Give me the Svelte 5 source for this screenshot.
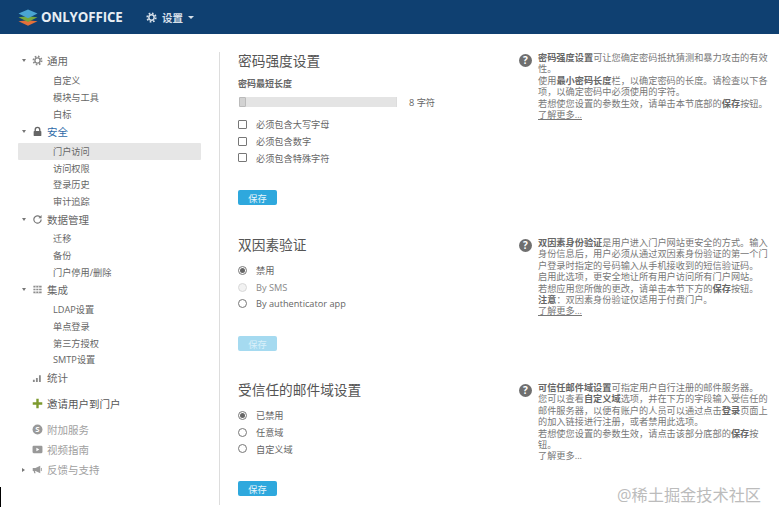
<script>
  const nav = [
    { label: '通用', icon: 'gear', caret: 'down', subs: ['自定义', '模块与工具', '白标'] },
    { label: '安全', icon: 'lock', caret: 'down', active: true, subs: ['门户访问', '访问权限', '登录历史', '审计追踪'], selected: '门户访问' },
    { label: '数据管理', icon: 'sync', caret: 'down', subs: ['迁移', '备份', '门户停用/删除'] },
    { label: '集成', icon: 'grid', caret: 'down', subs: ['LDAP设置', '单点登录', '第三方授权', 'SMTP设置'] },
    { label: '统计', icon: 'bars', subs: [] }
  ];
  const extras = [
    { label: '邀请用户到门户', icon: 'plus', cls: 'invite' },
    { label: '附加服务', icon: 'dollar', cls: 'muted first' },
    { label: '视频指南', icon: 'video', cls: 'muted' },
    { label: '反馈与支持', icon: 'horn', cls: 'muted', caret: 'right' }
  ];
</script>

{#snippet icon(name)}
  <svg class="ic" viewBox="0 0 12 12" width="12" height="12" aria-hidden="true">
    {#if name === 'gear'}
      <circle cx="6" cy="6" r="4.4" fill="none" stroke="#8a8a8a" stroke-width="2" stroke-dasharray="1.7 1.75" />
      <circle cx="6" cy="6" r="2.8" fill="none" stroke="#8a8a8a" stroke-width="1.5" />
    {:else if name === 'lock'}
      <path d="M3.5 6V4a2.5 2.5 0 0 1 5 0v2" fill="none" stroke="#666" stroke-width="1.5" />
      <rect x="1.8" y="5.4" width="8.4" height="5.6" rx="1" fill="#666" />
    {:else if name === 'sync'}
      <path d="M10 6a4 4 0 1 1-1.2-2.9" fill="none" stroke="#777" stroke-width="1.3" />
      <path d="M10.4 1.2v3.4H7z" fill="#777" />
    {:else if name === 'grid'}
      <path d="M1.5 2h9v1.8h-9zM1.5 5.1h9v1.8h-9zM1.5 8.2h9V10h-9z" fill="#8c8c8c" />
      <path d="M4.2 2v8M7.3 2v8" stroke="#fff" stroke-width=".8" />
    {:else if name === 'bars'}
      <path d="M1 8.5h2V11H1zM4.3 6.5h2V11h-2zM7.6 3.5h2V11h-2z" fill="#8a8a8a" />
    {:else if name === 'plus'}
      <path d="M4.7 .8h2.6v3.9h3.9v2.6H7.3v3.9H4.7V7.3H.8V4.7h3.9z" fill="#7d9a2e" />
    {:else if name === 'dollar'}
      <circle cx="6" cy="6" r="5.4" fill="#999" />
      <text x="6" y="9" text-anchor="middle" class="dollar">S</text>
    {:else if name === 'video'}
      <rect x=".6" y="2" width="10.8" height="8" rx="1.2" fill="#999" />
      <path d="M4.8 4.2v3.6L8 6z" fill="#fff" />
    {:else if name === 'horn'}
      <path d="M.8 4.4h3L9 2v8L3.8 7.6h-.5l.6 2.6H2.4L1.8 7.6h-1z" fill="#999" />
      <path d="M10.2 4.3v3.4" stroke="#999" stroke-width="1" />
    {/if}
  </svg>
{/snippet}

{#snippet caret(dir)}
  <span class="caret {dir}"></span>
{/snippet}

{#snippet help(lines)}
  <div class="help">
    <span class="q">?</span>
    <p>
      {#each lines as line}
        <span class="line" class:link={line.link}>
          {#if line.bold}<b>{line.bold}</b>{/if}{line.text}{#if line.bold2}<b>{line.bold2}</b>{/if}{line.text2 ?? ''}
        </span>
      {/each}
    </p>
  </div>
{/snippet}

<div class="page">
  <header>
    <svg class="logo" viewBox="0 0 20 17" width="20" height="17" aria-hidden="true">
      <path d="M10 11.2 19.5 12.2 10 16.8 .5 12.2z" fill="#e2703a" />
      <path d="M10 7.2 19.5 8.2 10 12.9 .5 8.2z" fill="#76a83c" />
      <path d="M10 .4 19.5 4.6 10 9.2 .5 4.6z" fill="#4aa5d1" />
    </svg>
    <span class="brand">ONLYOFFICE</span>
    <svg class="hgear" viewBox="0 0 12 12" width="11" height="11" aria-hidden="true">
      <circle cx="6" cy="6" r="4.6" fill="none" stroke="#d5dfe9" stroke-width="2" stroke-dasharray="1.8 1.8" />
      <circle cx="6" cy="6" r="2.9" fill="none" stroke="#d5dfe9" stroke-width="1.6" />
    </svg>
    <span class="hset">设置</span>
    <span class="hcaret"></span>
  </header>

  <div class="body">
    <nav>
      {#each nav as group}
        <div class="main" class:active={group.active}>
          <span class="cw">{#if group.caret}{@render caret(group.caret)}{/if}</span>
          {@render icon(group.icon)}
          <span>{group.label}</span>
        </div>
        {#each group.subs as s}
          <div class="sub" class:selected={s === group.selected}>{s}</div>
        {/each}
      {/each}
      {#each extras as e}
        <div class="main extra {e.cls}">
          <span class="cw">{#if e.caret}{@render caret(e.caret)}{/if}</span>
          {@render icon(e.icon)}
          <span>{e.label}</span>
        </div>
      {/each}
    </nav>

    <main>
      <section class="s1">
        <div class="col">
          <h2>密码强度设置</h2>
          <div class="lbl">密码最短长度</div>
          <div class="slider">
            <div class="track"><span class="thumb"></span></div>
            <span class="val">8 字符</span>
          </div>
          <div class="opts">
            <label><span class="box"></span>必须包含大写字母</label>
            <label><span class="box"></span>必须包含数字</label>
            <label><span class="box"></span>必须包含特殊字符</label>
          </div>
          <button class="save">保存</button>
        </div>
        {@render help([
          { bold: '密码强度设置', text: '可让您确定密码抵抗猜测和暴力攻击的有效' },
          { text: '性。' },
          { text: '使用', bold2: '最小密码长度', text2: '栏，以确定密码的长度。请检查以下各' },
          { text: '项，以确定密码中必须使用的字符。' },
          { text: '若想使您设置的参数生效，请单击本节底部的', bold2: '保存', text2: '按钮。' },
          { text: '了解更多...', link: true }
        ])}
      </section>

      <section class="s2">
        <div class="col">
          <h2>双因素验证</h2>
          <div class="opts radios">
            <label><span class="radio on"></span>禁用</label>
            <label class="off"><span class="radio dis"></span>By SMS</label>
            <label><span class="radio"></span>By authenticator app</label>
          </div>
          <button class="save disabled">保存</button>
        </div>
        {@render help([
          { bold: '双因素身份验证', text: '是用户进入门户网站更安全的方式。输入' },
          { text: '身份信息后，用户必须从通过双因素身份验证的第一个门' },
          { text: '户登录时指定的号码输入从手机接收到的短信验证码。' },
          { text: '启用此选项，更安全地让所有用户访问所有门户网站。' },
          { text: '若想应用您所做的更改，请单击本节下方的', bold2: '保存', text2: '按钮。' },
          { bold: '注意', text: '：双因素身份验证仅适用于付费门户。' },
          { text: '了解更多...', link: true }
        ])}
      </section>

      <section class="s3">
        <div class="col">
          <h2>受信任的邮件域设置</h2>
          <div class="opts radios">
            <label><span class="radio on"></span>已禁用</label>
            <label><span class="radio"></span>任意域</label>
            <label><span class="radio"></span>自定义域</label>
          </div>
          <button class="save">保存</button>
        </div>
        {@render help([
          { bold: '可信任邮件域设置', text: '可指定用户自行注册的邮件服务器。' },
          { text: '您可以查看', bold2: '自定义域', text2: '选项，并在下方的字段输入受信任的' },
          { text: '邮件服务器，以便有账户的人员可以通过点击', bold2: '登录', text2: '页面上' },
          { text: '的加入链接进行注册，或者禁用此选项。' },
          { text: '若想使您设置的参数生效，请点击该部分底部的', bold2: '保存', text2: '按' },
          { text: '钮。' },
          { text: '了解更多...' }
        ])}
      </section>
    </main>
  </div>

  <div class="tick"></div>
  <div class="mark">@稀土掘金技术社区</div>
</div>

<style>
  :global(body) { margin: 0; background: #fff; }
  .page {
    position: relative;
    width: 779px;
    height: 519px;
    overflow: hidden;
    background: #fff;
    color: #444;
    font-family: "Open Sans", "Noto Sans CJK SC", sans-serif;
    font-size: 9.2px;
  }
  header {
    height: 34px;
    background: #0f4071;
    display: flex;
    align-items: center;
    padding-left: 18px;
    box-sizing: border-box;
    color: #fff;
  }
  .brand { margin-left: 3px; font-size: 13.3px; font-weight: 700; letter-spacing: -.1px; color: #e8eef4; width: 105px; }
  .hset { margin-left: 5px; font-size: 10.5px; color: #d5dfe9; font-weight: 700; }
  .hgear { display: block; }
  .hcaret {
    margin-left: 5px;
    border: 3px solid transparent;
    border-top: 3px solid #d5dfe9;
    border-bottom: 0;
  }
  .body { display: grid; grid-template-columns: 219px 1fr; height: 471px; }

  nav { padding-top: 17.5px; padding-left: 18px; box-sizing: border-box; width: 219px; }
  .main {
    height: 20.5px;
    margin: -1px 0 1px;
    display: flex;
    align-items: center;
    font-size: 10.5px;
    color: #666;
  }
  .main.active { color: #2e6aa8; }
  .cw { width: 10px; margin-left: 4px; flex: none; display: flex; }
  .caret { display: block; border: 2.5px solid transparent; }
  .caret.down { border-top: 3px solid #777; border-bottom: 0; }
  .caret.right { border-left: 3px solid #777; border-right: 0; }
  .ic { flex: none; width: 11px; height: 11px; margin-right: 4px; }
  .dollar { font: 700 8.5px "Open Sans", sans-serif; fill: #fff; }
  .sub {
    height: 16.75px;
    padding-top: 2px;
    line-height: 14.75px;
    padding-left: 35px;
    width: 183px;
    box-sizing: border-box;
    color: #666;
  }
  .sub.selected { background: #e6e6e6; border-radius: 1px; }
  .extra { height: 20px; margin: 0; }
  .extra.invite { margin-top: 6px; margin-bottom: 6px; color: #555; }
  .extra.first { margin-top: 6px; }
  .extra.muted { color: #a0a0a0; }

  main {
    margin-top: 18px;
    height: 453px;
    border-left: 1px solid #ddd;
    padding-left: 18px;
  }
  section { display: grid; grid-template-columns: 281px 250px; }
  .s1 { height: 184px; }
  .s2 { height: 145px; }
  h2 {
    margin: 0;
    font-size: 13.7px;
    line-height: 18px;
    font-weight: 400;
    color: #555;
  }
  .lbl { margin-top: 8px; font-size: 9px; font-weight: 700; color: #666; line-height: 12px; }
  .slider { display: flex; align-items: center; margin-top: 6px; height: 12px; }
  .track {
    width: 158px;
    height: 10px;
    margin-left: 1px;
    background: #e4e4e4;
    border-right: 1px solid #ddd;
    box-sizing: border-box;
    position: relative;
  }
  .thumb {
    position: absolute;
    left: 0;
    top: 0;
    width: 7px;
    height: 10px;
    background: #d2d2d2;
    border: 1px solid #bbb;
    box-sizing: border-box;
    border-radius: 1px;
  }
  .val { margin-left: 12px; color: #666; }
  .opts { margin-top: 8px; display: flex; flex-direction: column; }
  .opts label { height: 16.75px; display: flex; align-items: center; color: #666; }
  .opts label.off { color: #888; }
  .radios { margin-top: 8px; }
  .box {
    width: 9px;
    height: 9px;
    border: 1px solid #777;
    border-radius: 1px;
    box-sizing: border-box;
    margin-right: 9px;
    flex: none;
  }
  .radio {
    width: 9px;
    height: 9px;
    border: 1px solid #777;
    border-radius: 50%;
    box-sizing: border-box;
    margin-right: 9px;
    flex: none;
    background: #fff;
    position: relative;
  }
  .radio.dis { border-color: #d8d8d8; background: #f2f2f2; }
  .radio.on::after {
    content: "";
    position: absolute;
    left: 1px;
    top: 1px;
    width: 5px;
    height: 5px;
    border-radius: 50%;
    background: #666;
  }
  .save {
    display: block;
    width: 39px;
    height: 15px;
    padding: 0;
    border: 0;
    border-radius: 2px;
    background: #2ea8dd;
    color: #e8f6fc;
    font: inherit;
    font-size: 9.2px;
  }
  .s1 .save { margin-top: 24px; }
  .s2 .save, .s3 .save { margin-top: 24px; }
  .save.disabled { background: #a5daf0; color: #d9f0fa; }

  .help { display: flex; padding-top: 2px; }
  .s2 .help, .s3 .help { padding-top: 3px; }
  .q {
    flex: none;
    width: 13px;
    height: 13px;
    margin-right: 6px;
    border-radius: 50%;
    background: #6f6f6f;
    color: #fff;
    font-size: 10px;
    font-weight: 700;
    line-height: 13px;
    text-align: center;
  }
  .help p { margin: -2px 0 0; line-height: 11.4px; color: #777; }
  .line { display: block; white-space: nowrap; }
  .line.link { text-decoration: underline; }
  .help b { font-weight: 700; color: #666; }

  .tick { position: absolute; left: 0; top: 487px; width: 1px; height: 20px; background: #000; }
  .mark {
    position: absolute;
    left: 617px;
    top: 485px;
    font-size: 16.2px;
    line-height: 20px;
    white-space: nowrap;
    color: #bcbcbc;
  }
</style>
